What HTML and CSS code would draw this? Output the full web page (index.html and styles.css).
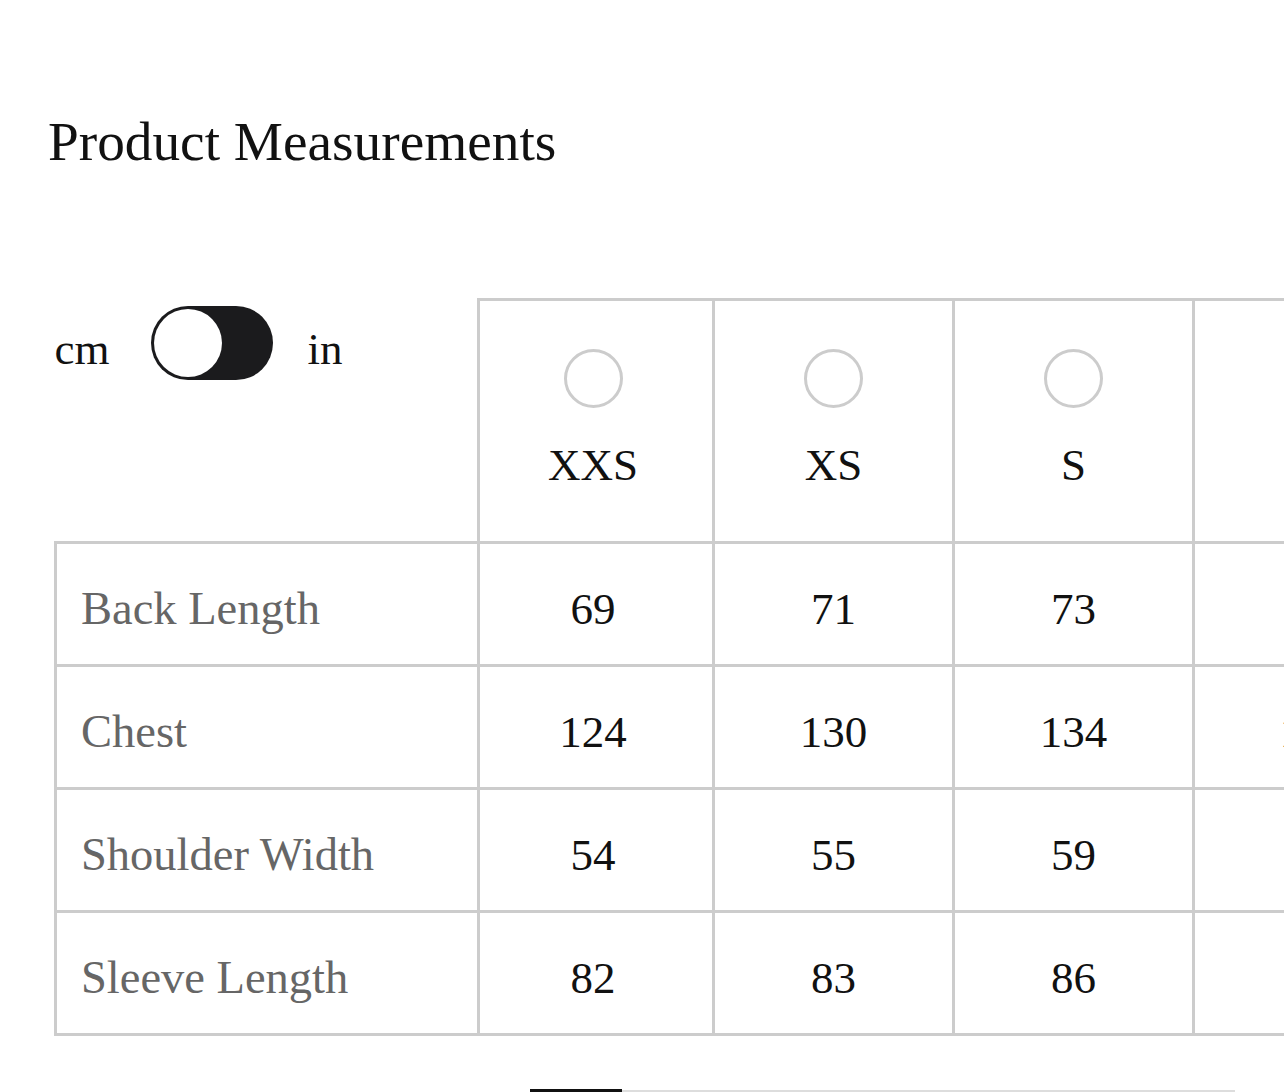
FILE: index.html
```html
<!DOCTYPE html>
<html lang="en">
<head>
<meta charset="utf-8">
<title>Product Measurements</title>
<link rel="stylesheet" href="styles.css">
</head>
<body>
<main class="page">
  <h1 class="title">Product Measurements</h1>
  <div class="table-wrap">
    <table class="sizes">
      <colgroup>
        <col class="col-label">
        <col class="col-first">
        <col class="col-size">
        <col class="col-size">
        <col class="col-size">
        <col class="col-size">
      </colgroup>
      <thead>
        <tr>
          <th class="corner">
            <div class="unit-switch">
              <span class="unit unit-cm">cm</span>
              <span class="toggle"><span class="knob"></span></span>
              <span class="unit unit-in">in</span>
            </div>
          </th>
          <th class="size-head first"><span class="ring"></span><span class="size-name">XXS</span></th>
          <th class="size-head"><span class="ring"></span><span class="size-name">XS</span></th>
          <th class="size-head"><span class="ring"></span><span class="size-name">S</span></th>
          <th class="size-head"><span class="ring"></span><span class="size-name">M</span></th>
          <th class="size-head"><span class="ring"></span><span class="size-name">L</span></th>
        </tr>
      </thead>
      <tbody>
        <tr>
          <th class="label">Back Length</th>
          <td class="first">69</td><td>71</td><td>73</td><td>75</td><td>77</td>
        </tr>
        <tr>
          <th class="label">Chest</th>
          <td class="first">124</td><td>130</td><td>134</td><td>138</td><td>142</td>
        </tr>
        <tr>
          <th class="label">Shoulder Width</th>
          <td class="first">54</td><td>55</td><td>59</td><td>61</td><td>63</td>
        </tr>
        <tr>
          <th class="label">Sleeve Length</th>
          <td class="first">82</td><td>83</td><td>86</td><td>88</td><td>90</td>
        </tr>
      </tbody>
    </table>
  </div>
  <div class="scroll-track"><span class="scroll-thumb"></span></div>
</main>
</body>
</html>
```
FILE: styles.css
```css
html, body {
  margin: 0;
  padding: 0;
  background: #fff;
  overflow: hidden;
}

body {
  font-family: "Liberation Serif", "Times New Roman", serif;
  color: #111;
}

.page {
  width: 1284px;
  height: 1092px;
  overflow: hidden;
}

.title {
  margin: 109px 0 0 48px;
  font-size: 55.3px;
  line-height: 66px;
  font-weight: normal;
  color: #111;
}

.table-wrap {
  margin-top: 123px;
  padding-left: 54px;
  width: 1700px;
}

.sizes {
  border-collapse: collapse;
  table-layout: fixed;
  width: 1618px;
  font-size: 45px;
}

.col-label { width: 423px; }
.col-first { width: 235px; }
.col-size { width: 240px; }

.sizes th,
.sizes td {
  border: 3px solid #cccccc;
  padding: 0;
  font-weight: normal;
}

.sizes .corner {
  border-top: none;
  border-left: none;
  vertical-align: top;
  text-align: left;
  height: 240px;
}

.unit-switch {
  display: flex;
  align-items: center;
  height: 74px;
  margin-top: 6px;
}

.unit {
  font-size: 45px;
  line-height: 54px;
  color: #111;
  margin-top: 12px;
}

.unit-cm { margin-left: -1px; }

.toggle {
  display: flex;
  align-items: center;
  box-sizing: border-box;
  width: 122px;
  height: 74px;
  padding: 3px;
  margin: 0 34px 0 42px;
  border-radius: 37px;
  background: #1b1b1d;
}

.knob {
  width: 68px;
  height: 68px;
  border-radius: 50%;
  background: #fff;
}

.size-head {
  vertical-align: top;
  text-align: center;
  height: 240px;
}

.ring {
  display: block;
  box-sizing: border-box;
  width: 59px;
  height: 59px;
  margin: 48px auto 0;
  border: 3px solid #cccccc;
  border-radius: 50%;
}

.size-name {
  display: block;
  margin-top: 30px;
  line-height: 54px;
  color: #111;
}

.sizes .first {
  padding-right: 6px;
}

.sizes tbody th,
.sizes tbody td {
  height: 110px;
  vertical-align: middle;
  line-height: 54px;
  padding-top: 10px;
}

.sizes tbody td {
  text-align: center;
  color: #111;
}

.sizes .label {
  text-align: left;
  padding-left: 24px;
  color: #666;
  font-size: 46.5px;
}

.scroll-track {
  position: relative;
  margin: 54px 0 0 530px;
  width: 705px;
  height: 2px;
  background: #dddddd;
}

.scroll-thumb {
  position: absolute;
  left: 0;
  top: -1px;
  width: 92px;
  height: 4px;
  background: #111;
}
```
